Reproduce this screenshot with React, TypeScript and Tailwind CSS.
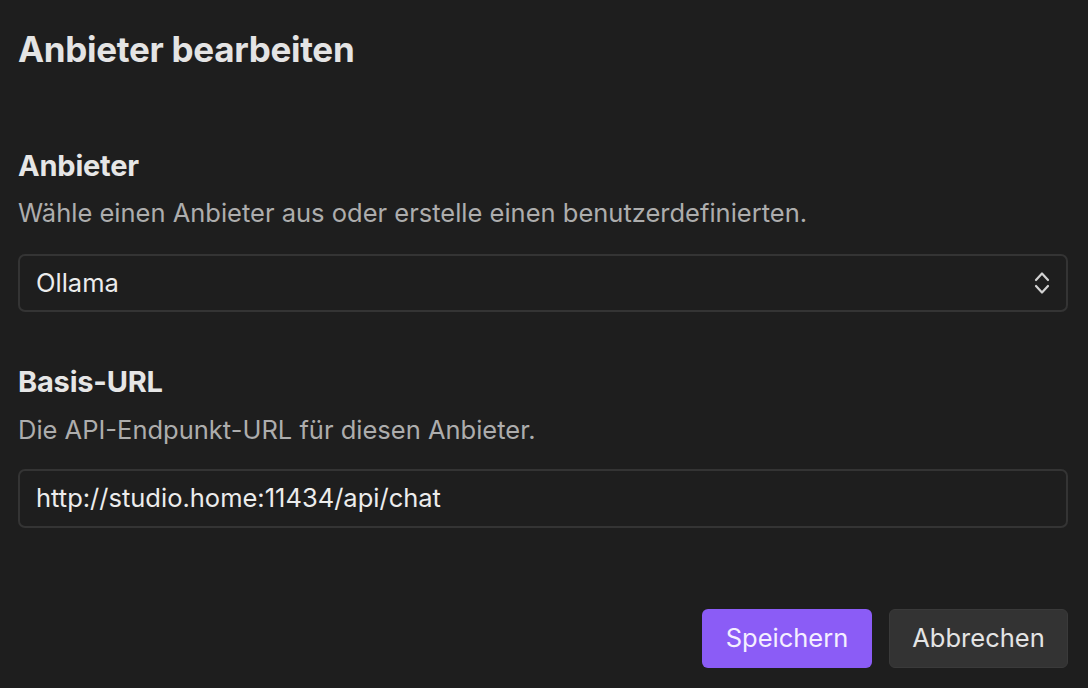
export default function App() {
  return (
    <div
      className="min-h-[688px] w-full bg-[#1e1e1e] pl-[18px] pr-[20px] text-[#e6e6e6]"
      style={{ fontFamily: 'Inter, "Noto Sans", sans-serif' }}
    >
      {/* Title */}
      <h1 className="pt-[28px] text-[35px] font-bold leading-[42px] tracking-[-0.3px] text-[#e4e4e4]">
        Anbieter bearbeiten
      </h1>

      {/* Provider */}
      <section className="mt-[78px]">
        <h2 className="text-[29px] font-bold leading-[36px] tracking-[-0.2px] text-[#e6e6e6]">Anbieter</h2>
        <p className="mt-[13px] text-[25.5px] leading-[32px] text-[#adadad]">
          Wähle einen Anbieter aus oder erstelle einen benutzerdefinierten.
        </p>
        <div className="mt-[25px] flex h-[58px] items-center justify-between rounded-[7px] border-2 border-[#343434] bg-[#1e1e1e] pl-[16px] pr-[14px]">
          <span className="text-[25.5px] text-[#ececec]">Ollama</span>
          <svg width="20" height="26" viewBox="0 0 20 26" fill="none" stroke="#d2d2d2" strokeWidth="2.2" strokeLinecap="round" strokeLinejoin="round">
            <path d="M4 10 L10 3.5 L16 10" />
            <path d="M4 16 L10 22.5 L16 16" />
          </svg>
        </div>
      </section>

      {/* Base URL */}
      <section className="mt-[52px]">
        <h2 className="text-[29px] font-bold leading-[36px] tracking-[-0.2px] text-[#e6e6e6]">Basis-URL</h2>
        <p className="mt-[14px] text-[25.5px] leading-[32px] text-[#adadad]">
          Die API-Endpunkt-URL für diesen Anbieter.
        </p>
        <div className="mt-[23px] flex h-[59px] items-center rounded-[7px] border-2 border-[#343434] bg-[#1e1e1e] pl-[16px]">
          <span className="text-[25.5px] text-[#ececec]">http://studio.home:11434/api/chat</span>
        </div>
      </section>

      {/* Actions */}
      <div className="mt-[81px] flex justify-end gap-[17px]">
        <button className="h-[59px] w-[170px] rounded-[6px] bg-[#8b5cf6] text-[25.5px] text-[#f4efff]">
          Speichern
        </button>
        <button className="h-[59px] w-[179px] rounded-[6px] border border-[#3a3a3a] bg-[#333333] text-[25.5px] text-[#e4e4e4]">
          Abbrechen
        </button>
      </div>
    </div>
  );
}
